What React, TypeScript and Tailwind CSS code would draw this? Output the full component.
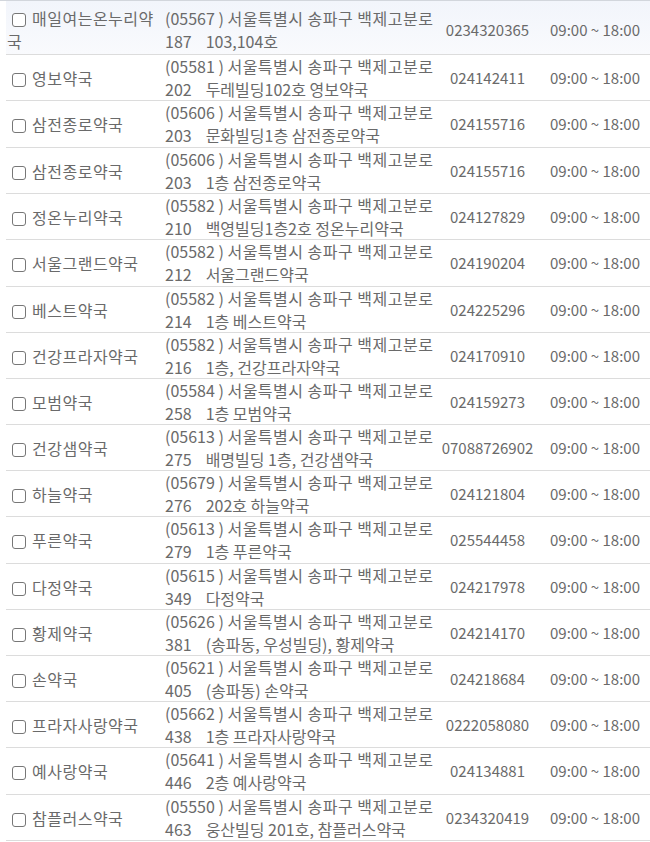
import React from "react";

type Pharmacy = {
  name: string;
  zip: string;
  no: string;
  rest: string;
  phone: string;
  tall?: boolean;
};

const rows: Pharmacy[] = [
  { name: "매일여는온누리약국", zip: "05567", no: "187", rest: "103,104호", phone: "0234320365" },
  { name: "영보약국", zip: "05581", no: "202", rest: "두레빌딩102호 영보약국", phone: "024142411" },
  { name: "삼전종로약국", zip: "05606", no: "203", rest: "문화빌딩1층 삼전종로약국", phone: "024155716", tall: true },
  { name: "삼전종로약국", zip: "05606", no: "203", rest: "1층 삼전종로약국", phone: "024155716" },
  { name: "정온누리약국", zip: "05582", no: "210", rest: "백영빌딩1층2호 정온누리약국", phone: "024127829" },
  { name: "서울그랜드약국", zip: "05582", no: "212", rest: "서울그랜드약국", phone: "024190204", tall: true },
  { name: "베스트약국", zip: "05582", no: "214", rest: "1층 베스트약국", phone: "024225296" },
  { name: "건강프라자약국", zip: "05582", no: "216", rest: "1층, 건강프라자약국", phone: "024170910" },
  { name: "모범약국", zip: "05584", no: "258", rest: "1층 모범약국", phone: "024159273" },
  { name: "건강샘약국", zip: "05613", no: "275", rest: "배명빌딩 1층, 건강샘약국", phone: "07088726902" },
  { name: "하늘약국", zip: "05679", no: "276", rest: "202호 하늘약국", phone: "024121804" },
  { name: "푸른약국", zip: "05613", no: "279", rest: "1층 푸른약국", phone: "025544458", tall: true },
  { name: "다정약국", zip: "05615", no: "349", rest: "다정약국", phone: "024217978" },
  { name: "황제약국", zip: "05626", no: "381", rest: "(송파동, 우성빌딩), 황제약국", phone: "024214170" },
  { name: "손약국", zip: "05621", no: "405", rest: "(송파동) 손약국", phone: "024218684" },
  { name: "프라자사랑약국", zip: "05662", no: "438", rest: "1층 프라자사랑약국", phone: "0222058080" },
  { name: "예사랑약국", zip: "05641", no: "446", rest: "2층 예사랑약국", phone: "024134881", tall: true },
  { name: "참플러스약국", zip: "05550", no: "463", rest: "웅산빌딩 201호, 참플러스약국", phone: "0234320419" },
];

function Row({ p, first }: { p: Pharmacy; first: boolean }) {
  const height = first ? "h-[54px] pt-[5px] bg-gradient-to-b from-[#f2f5fb] to-[#f9fafd]" : p.tall ? "h-[47px]" : "h-[46px]";
  return (
    <div className={`ml-[6px] grid grid-cols-[154px_275px_105px_110px] items-center border-b border-[#dcdcdc] ${height}`}>
      <div className="pl-[1px] pr-[1px] leading-[23px] tracking-[0.5px]">
        <input
          type="checkbox"
          className="appearance-none inline-block w-[14px] h-[14px] border-[1.5px] border-[#777] rounded-[3px] bg-white align-[-2px] mr-[6px] ml-[5px]"
        />
        {p.name}
      </div>
      <div className="pl-[5px] leading-[23px]">
        <div className="whitespace-nowrap">
          ({p.zip} ) <span className="tracking-[0.5px]">서울특별시 송파구 백제고분로</span>
        </div>
        <div className="whitespace-nowrap">
          {p.no}
          <span className="inline-block w-[14px]" />
          {p.rest}
        </div>
      </div>
      <div className="text-center text-[15px]">{p.phone}</div>
      <div className="text-center text-[15px] whitespace-nowrap">09:00 ~ 18:00</div>
    </div>
  );
}

export default function App() {
  return (
    <div className="min-h-screen bg-white text-[16px] text-[#6a6a6a] font-['Noto_Sans_CJK_KR','Noto_Sans',sans-serif] overflow-hidden">
      <div className="border-t border-[#d2d6dc]">
        {rows.map((p, i) => (
          <Row key={i} p={p} first={i === 0} />
        ))}
      </div>
    </div>
  );
}
